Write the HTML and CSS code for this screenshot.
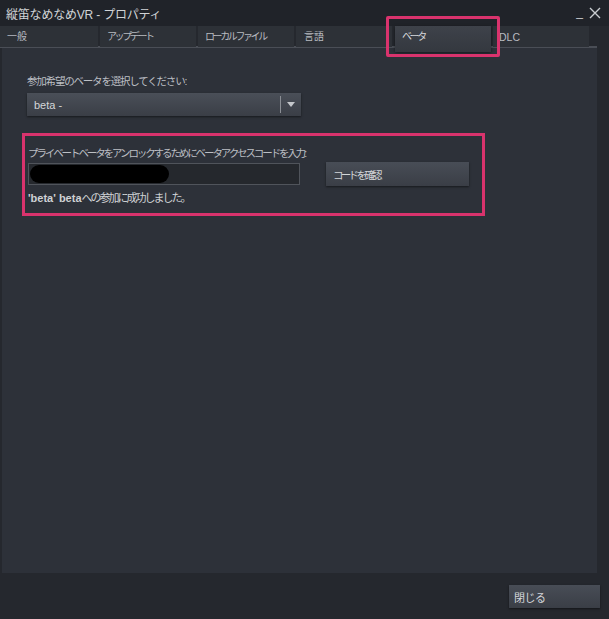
FILE: index.html
```html
<!DOCTYPE html>
<html lang="ja">
<head>
<meta charset="utf-8">
<link rel="stylesheet" href="styles.css">
</head>
<body>
<div class="window">
  <div class="titlebar">
    <span class="title">縦笛なめなめVR - プロパティ</span>
    <span class="controls"><span class="min">_</span><svg class="close-x" width="12" height="12" viewBox="0 0 12 12"><path d="M1 1 L11 11 M11 1 L1 11" stroke="#c9ccd0" stroke-width="1.4" fill="none"/></svg></span>
  </div>
  <div class="tabs">
    <div class="tab">一般</div>
    <div class="tab kana">アップデート</div>
    <div class="tab kana">ローカルファイル</div>
    <div class="tab">言語</div>
    <div class="tab kana active">ベータ</div>
    <div class="tab latin">DLC</div>
    <div class="tab-mark"></div>
  </div>
  <div class="panel">
    <div class="label select-label">参加希望のベータを選択してください:</div>
    <div class="select">
      <span class="select-text">beta -</span>
      <span class="select-div"></span>
      <svg class="select-arrow" width="8" height="5" viewBox="0 0 8 5"><path d="M0 0 H8 L4 5 Z" fill="#c4c7cb"/></svg>
    </div>
    <div class="codebox">
      <div class="label code-label">プライベートベータをアンロックするためにベータアクセスコードを入力:</div>
      <div class="code-row">
        <div class="code-input"><span class="redact"></span></div>
        <div class="btn code-btn">コードを確認</div>
      </div>
      <div class="success"><b>'beta' beta</b><span class="success-jp">への参加に成功しました。</span></div>
    </div>
  </div>
  <div class="footer">
    <div class="btn close-btn">閉じる</div>
  </div>
</div>
</body>
</html>
```
FILE: styles.css
```css
* { box-sizing: border-box; }
html, body { margin: 0; padding: 0; }
body {
  width: 609px;
  height: 619px;
  background: #24272d;
  font-family: "Liberation Sans", "Noto Sans CJK JP", sans-serif;
  font-size: 11px;
  color: #c3c6ca;
  overflow: hidden;
}
.window {
  position: relative;
  width: 609px;
  height: 619px;
  background: #25282e;
}
.titlebar {
  height: 26px;
  display: flex;
  align-items: center;
  justify-content: space-between;
  padding: 0 8px 0 6px;
  background: #202329;
}
.title { font-size: 12px; color: #d0d3d6; letter-spacing: -0.2px; }
.controls { display: flex; align-items: center; gap: 6px; }
.min { color: #c9ccd0; font-size: 12px; line-height: 1; margin-top: -2px; }
.tabs {
  position: relative;
  display: flex;
  gap: 2px;
  height: 22px;
  border-bottom: 2px solid #4a4e56;
  width: 597px;
}
.tab {
  width: 96px;
  height: 21px;
  padding: 4px 0 0 8px;
  background: #2d3137;
  color: #b8bbc0;
  font-size: 10px;
  line-height: 14px;
}
.tab.kana { letter-spacing: -2.4px; padding-left: 7px; }
.tab.latin { padding-left: 6px; font-size: 10.5px; }
.tab:first-child { width: 98px; padding-left: 7px; }
.tab.active {
  height: 26px;
  margin-left: 1px;
  background: linear-gradient(#3e424a, #34383f);
  color: #d6d8db;
  box-shadow: 0 1px 3px rgba(0,0,0,0.5);
  z-index: 1;
}
.tab-mark {
  position: absolute;
  left: 386px;
  top: -10px;
  width: 114px;
  height: 41px;
  border: 3px solid #d9336d;
  border-radius: 2px;
  z-index: 2;
}
.panel {
  margin: 0 12px 0 2px;
  height: 525px;
  background: #2d3139;
  padding: 25px 0 0 25px;
}
.label {
  color: #bcbfc4;
  font-size: 10.5px;
  height: 18px;
}
.select-label { letter-spacing: -1.2px; }
.code-label { letter-spacing: -2.1px; }
.select {
  width: 274px;
  height: 23px;
  margin-top: 2px;
  display: flex;
  align-items: center;
  background: linear-gradient(#4a4f58, #3a3e46);
  box-shadow: 0 1px 2px rgba(0,0,0,0.5);
}
.select-text { flex: 1; padding-left: 7px; color: #d4d6d9; font-size: 11px; }
.select-div { width: 1px; height: 17px; background: #8b8f95; }
.select-arrow { margin: 0 6px 0 6px; }
.codebox {
  width: 463px;
  height: 83px;
  margin: 17px 0 0 -5px;
  border: 3px solid #d9336d;
  padding: 9px 0 0 3px;
}
.codebox .label { height: 15px; }
.code-row { display: flex; align-items: center; gap: 26px; margin-top: 2px; }
.code-input {
  width: 272px;
  height: 22px;
  background: #25282d;
  border: 1px solid #50545b;
  padding: 1px;
}
.redact {
  display: block;
  width: 139px;
  height: 18px;
  background: #000;
  border-radius: 9px;
}
.btn {
  background: linear-gradient(#484d56, #3a3e46);
  color: #d4d6d9;
  font-size: 10.5px;
  display: flex;
  align-items: center;
  box-shadow: 0 1px 2px rgba(0,0,0,0.5);
}
.code-btn { width: 143px; height: 24px; padding-left: 7px; letter-spacing: -2.7px; }
.success { margin-top: 3px; font-size: 11px; color: #cfd2d5; }
.success b { font-weight: 700; }
.success-jp { letter-spacing: -2px; }
.footer {
  display: flex;
  justify-content: flex-end;
  padding: 12px 9px 0 0;
}
.close-btn { width: 91px; height: 23px; padding-left: 5px; font-size: 11px; letter-spacing: -0.5px; }
```
